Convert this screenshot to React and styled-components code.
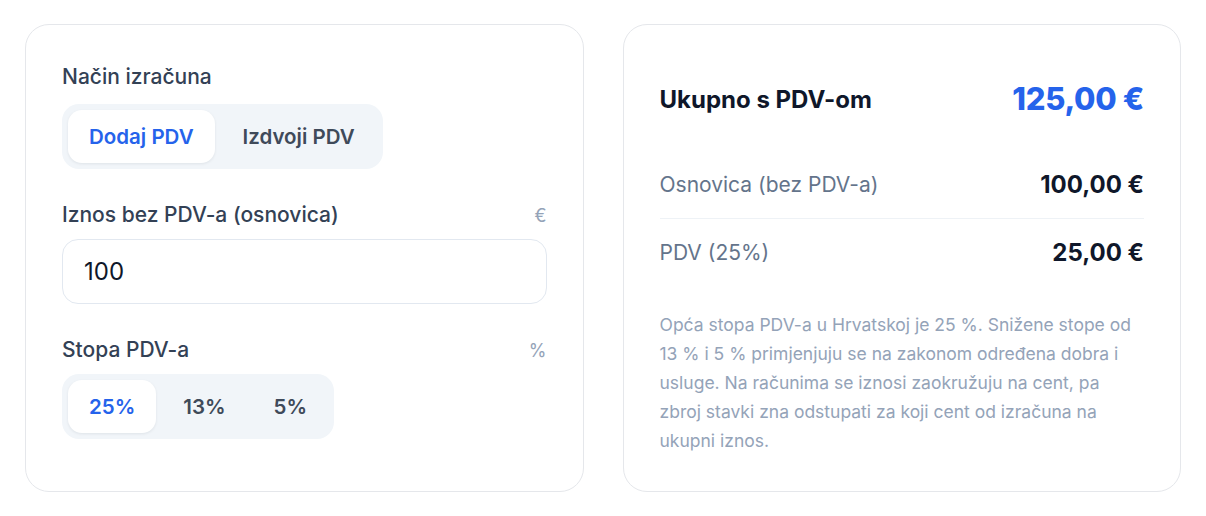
import { useState } from "react";
import styled, { createGlobalStyle } from "styled-components";

const GlobalStyle = createGlobalStyle`
  * { box-sizing: border-box; }
  body {
    margin: 0;
    background: #ffffff;
    font-family: Inter, "Noto Sans", sans-serif;
    color: #0f172a;
  }
`;

const Page = styled.div`
  display: grid;
  grid-template-columns: 1fr 1fr;
  gap: 39px;
  padding: 24px 25px 24px 25px;
  width: 1206px;
`;

const Card = styled.div`
  border: 1px solid #e5e7eb;
  border-radius: 24px;
  padding: 38px 36px 36px;
  background: #fff;
  display: flex;
  flex-direction: column;
`;

const Field = styled.div`
  display: flex;
  flex-direction: column;
  & + & {
    margin-top: 32px;
  }
`;

const LabelRow = styled.div`
  display: flex;
  justify-content: space-between;
  align-items: center;
  margin-bottom: ${(p) => p.$gap || 12}px;
`;

const Label = styled.span`
  font-size: 21px;
  line-height: 28px;
  font-weight: 500;
  color: #334155;
`;

const Unit = styled.span`
  font-size: 18px;
  color: #94a3b8;
`;

const Segment = styled.div`
  display: inline-flex;
  align-self: flex-start;
  gap: 6px;
  padding: 6px;
  background: #f1f5f9;
  border-radius: 17px;
`;

const SegButton = styled.button`
  border: none;
  font-family: inherit;
  font-size: 20.5px;
  font-weight: 600;
  height: 53px;
  padding: 0 ${(p) => p.$pad || 21}px;
  border-radius: 14px;
  cursor: pointer;
  background: ${(p) => (p.$active ? "#ffffff" : "transparent")};
  color: ${(p) => (p.$active ? "#2563eb" : "#3f4a5a")};
  box-shadow: ${(p) => (p.$active ? "0 1px 3px rgba(15, 23, 42, 0.08)" : "none")};
`;

const Input = styled.input`
  height: 65px;
  width: 100%;
  border: 1px solid #e2e8f0;
  border-radius: 16px;
  padding: 0 21px;
  font-family: inherit;
  font-size: 24px;
  color: #0f172a;
  outline: none;
`;

const TotalRow = styled.div`
  display: flex;
  justify-content: space-between;
  align-items: center;
  padding: 17px 0 18px;
`;

const TotalLabel = styled.span`
  font-size: 24px;
  font-weight: 700;
  color: #0f172a;
`;

const TotalValue = styled.span`
  font-size: 31px;
  line-height: 38px;
  font-weight: 800;
  color: #2563eb;
  letter-spacing: -0.3px;
`;

const Details = styled.div`
  margin-top: 15px;
`;

const DetailRow = styled.div`
  display: flex;
  justify-content: space-between;
  align-items: center;
  padding: 19px 0;
  line-height: 29px;
  & + & {
    border-top: 1px solid #eef2f6;
  }
`;

const DetailLabel = styled.span`
  font-size: 21px;
  color: #64748b;
`;

const DetailValue = styled.span`
  font-size: 24px;
  font-weight: 700;
  color: #0f172a;
`;

const Note = styled.p`
  margin: 24px 0 0;
  font-size: 17.5px;
  line-height: 29px;
  color: #94a3b8;
`;

export default function App() {
  const [mode, setMode] = useState("add");
  const [rate, setRate] = useState(25);
  const [amount, setAmount] = useState("100");

  const base = parseFloat(amount) || 0;
  const vat = (base * rate) / 100;
  const fmt = (n) => n.toFixed(2).replace(".", ",") + " €";

  return (
    <>
      <GlobalStyle />
      <Page>
        <Card>
          <Field>
            <LabelRow $gap={13}>
              <Label>Način izračuna</Label>
            </LabelRow>
            <Segment>
              <SegButton $pad={21} $active={mode === "add"} onClick={() => setMode("add")}>
                Dodaj PDV
              </SegButton>
              <SegButton $pad={22} $active={mode === "extract"} onClick={() => setMode("extract")}>
                Izdvoji PDV
              </SegButton>
            </Segment>
          </Field>
          <Field>
            <LabelRow $gap={10}>
              <Label>Iznos bez PDV-a (osnovica)</Label>
              <Unit>€</Unit>
            </LabelRow>
            <Input value={amount} onChange={(e) => setAmount(e.target.value)} />
          </Field>
          <Field>
            <LabelRow $gap={10}>
              <Label>Stopa PDV-a</Label>
              <Unit>%</Unit>
            </LabelRow>
            <Segment>
              {[25, 13, 5].map((r) => (
                <SegButton key={r} $pad={21} $active={rate === r} onClick={() => setRate(r)}>
                  {r}%
                </SegButton>
              ))}
            </Segment>
          </Field>
        </Card>
        <Card>
          <TotalRow>
            <TotalLabel>Ukupno s PDV-om</TotalLabel>
            <TotalValue>{fmt(base + vat)}</TotalValue>
          </TotalRow>
          <Details>
            <DetailRow>
              <DetailLabel>Osnovica (bez PDV-a)</DetailLabel>
              <DetailValue>{fmt(base)}</DetailValue>
            </DetailRow>
            <DetailRow>
              <DetailLabel>PDV ({rate}%)</DetailLabel>
              <DetailValue>{fmt(vat)}</DetailValue>
            </DetailRow>
          </Details>
          <Note>
            Opća stopa PDV-a u Hrvatskoj je 25 %. Snižene stope od 13 % i 5 % primjenjuju se na
            zakonom određena dobra i usluge. Na računima se iznosi zaokružuju na cent, pa zbroj
            stavki zna odstupati za koji cent od izračuna na ukupni iznos.
          </Note>
        </Card>
      </Page>
    </>
  );
}
